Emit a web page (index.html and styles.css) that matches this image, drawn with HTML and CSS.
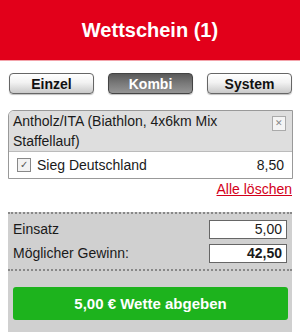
FILE: index.html
```html
<!DOCTYPE html>
<html lang="de">
<head>
    <meta charset="UTF-8">
    <meta name="viewport" content="width=device-width, initial-scale=1.0">
    <title>Wettschein</title>
    <link rel="stylesheet" href="styles.css">
</head>
<body>
    <div class="header">Wettschein (1)</div>
    <div class="tabs">
        <button class="tab">Einzel</button>
        <button class="tab active">Kombi</button>
        <button class="tab">System</button>
    </div>
    <div class="bet">
        <div class="bet-head">
            <span>Antholz/ITA (Biathlon, 4x6km Mix Staffellauf)</span>
            <span class="close">&#x2715;</span>
        </div>
        <div class="bet-row">
            <span class="check">&#x2713;</span>
            <span class="tip">Sieg Deutschland</span>
            <span class="odds">8,50</span>
        </div>
    </div>
    <div class="clear-row"><a href="#" class="clear">Alle löschen</a></div>
    <div class="summary">
        <div class="amounts">
            <div class="amount-row">
                <span>Einsatz</span>
                <span class="field">5,00</span>
            </div>
            <div class="amount-row">
                <span>Möglicher Gewinn:</span>
                <span class="field bold">42,50</span>
            </div>
        </div>
        <button class="submit">5,00 € Wette abgeben</button>
    </div>
</body>
</html>
```

FILE: styles.css
```css
body {
    margin: 0;
    font-family: "Liberation Sans", Arial, sans-serif;
    font-size: 14px;
    color: #1a1a1a;
    background: #fff;
}
.header {
    height: 60px;
    line-height: 60px;
    background-color: #e2001a;
    border-bottom: 1px solid #f3a3ab;
    color: #fff;
    font-size: 20px;
    font-weight: bold;
    text-align: center;
}
.tabs {
    display: flex;
    gap: 14px;
    padding: 12px 8px 0 9px;
}
.tab {
    width: 85px;
    height: 21px;
    padding: 0;
    border: 1px solid #666;
    border-radius: 4px;
    background: linear-gradient(#fff, #f2f2f2 45%, #c9c9c9);
    font-family: inherit;
    font-size: 14px;
    font-weight: bold;
    color: #111;
    box-shadow: 0 1px 1px rgba(0, 0, 0, 0.25);
}
.tab.active {
    background: linear-gradient(#5a5a5a, #7a7a7a 50%, #959595);
    border-color: #444;
    color: #fff;
}
.bet {
    margin: 16px 7px 0 8px;
    border: 1px solid #999;
    border-radius: 6px 0 0 0;
    overflow: hidden;
}
.bet-head {
    display: flex;
    justify-content: space-between;
    background: #dedede;
    padding: 0 6px 0 4px;
    line-height: 20px;
    border-bottom: 1px solid #bbb;
}
.close {
    flex: none;
    width: 12px;
    height: 13px;
    margin-top: 5px;
    border: 1px solid #aaa;
    background: #f4f4f4;
    color: #888;
    font-size: 9px;
    line-height: 13px;
    text-align: center;
}
.bet-row {
    display: flex;
    align-items: center;
    height: 26px;
    padding: 0 8px;
    background: #fff;
}
.check {
    width: 12px;
    height: 12px;
    border: 1px solid #888;
    background: #f2f2f2;
    color: #555;
    font-size: 10px;
    line-height: 12px;
    text-align: center;
    margin-right: 6px;
}
.tip {
    flex: 1;
}
.clear-row {
    text-align: right;
    padding: 2px 8px 0 0;
    height: 31px;
}
.clear {
    color: #d3001a;
    text-decoration: underline;
}
.summary {
    margin: 0 8px;
    border-top: 2px dotted #888;
    background: #d0d0d0;
    padding-bottom: 14px;
}
.amounts {
    padding: 3px 5px 4px 5px;
    border-bottom: 2px dotted #888;
}
.amount-row {
    display: flex;
    justify-content: space-between;
    align-items: center;
    height: 24px;
}
.field {
    width: 72px;
    height: 17px;
    line-height: 17px;
    border: 1px solid #666;
    background: #fff;
    text-align: right;
    padding-right: 4px;
}
.bold {
    font-weight: bold;
}
.submit {
    display: block;
    margin: 16px 4px 0 5px;
    width: 275px;
    height: 33px;
    border: none;
    border-radius: 3px;
    background: #1db31d;
    color: #fff;
    font-family: inherit;
    font-size: 15px;
    font-weight: bold;
}
```
